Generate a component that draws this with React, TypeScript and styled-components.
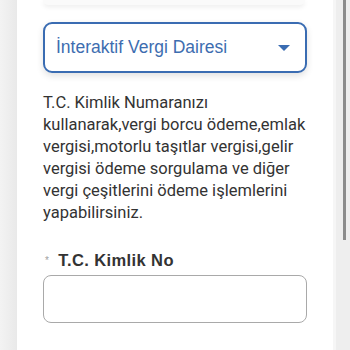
import React from 'react';
import styled, { createGlobalStyle } from 'styled-components';

const GlobalStyle = createGlobalStyle`
  html, body {
    margin: 0;
    padding: 0;
    background: #eeeeee;
  }
  * {
    box-sizing: border-box;
  }
`;

const Screen = styled.div`
  display: flex;
  width: 350px;
  height: 350px;
  overflow: hidden;
  font-family: 'Liberation Sans', Arial, sans-serif;
`;

const LeftGutter = styled.div`
  width: 17px;
  flex-shrink: 0;
  background: linear-gradient(to right, #f3f3f3, #e9e9e9);
`;

const Panel = styled.div`
  width: 316px;
  flex-shrink: 0;
  background: #ffffff;
  padding: 0 26px;
  display: flex;
  flex-direction: column;
`;

const RightGutter = styled.div`
  flex: 1;
  background: #eeeeee;
  border-left: 3px solid #f6f6f6;
  display: flex;
  justify-content: flex-end;
  padding-right: 4px;
`;

const ScrollThumb = styled.div`
  width: 3px;
  height: 240px;
  background: #8c8c8c;
`;

const TopCard = styled.div`
  height: 5px;
  margin-right: 2px;
  background: #fafafa;
  border-radius: 0 0 8px 8px;
  box-shadow: 0 2px 5px rgba(0, 0, 0, 0.08);
`;

const Select = styled.div`
  margin-top: 17px;
  height: 51px;
  border: 2px solid #3a6cb2;
  border-radius: 9px;
  box-shadow: 0 3px 7px rgba(0, 0, 0, 0.12);
  display: flex;
  align-items: center;
  justify-content: space-between;
  padding: 0 15px 0 11px;
  color: #3d6db0;
  font-size: 17.5px;
`;

const Caret = styled.span`
  width: 0;
  height: 0;
  border-left: 6px solid transparent;
  border-right: 6px solid transparent;
  border-top: 6px solid #3a6cb2;
  margin-top: 1px;
`;

const Description = styled.p`
  margin: 19px 0 0;
  font-family: Roboto, 'Liberation Sans', sans-serif;
  font-size: 16.5px;
  line-height: 22px;
  color: #333333;
`;

const Label = styled.div`
  margin-top: 27px;
  display: flex;
  align-items: center;
  gap: 9px;
  padding-left: 2px;
  font-size: 16.5px;
  font-weight: 700;
  letter-spacing: 0.4px;
  color: #333333;
`;

const Star = styled.span`
  color: #a0a0a0;
  font-size: 10px;
  font-weight: 400;
`;

const Input = styled.input`
  margin-top: 5px;
  height: 48px;
  width: 100%;
  border: 1px solid #a9a9a9;
  border-radius: 8px;
  background: #ffffff;
  outline: none;
`;

export default function App() {
  return (
    <>
      <GlobalStyle />
      <Screen>
        <LeftGutter />
        <Panel>
          <TopCard />
          <Select>
            <span>İnteraktif Vergi Dairesi</span>
            <Caret />
          </Select>
          <Description>
            T.C. Kimlik Numaranızı kullanarak,vergi borcu ödeme,emlak vergisi,motorlu taşıtlar
            vergisi,gelir vergisi ödeme sorgulama ve diğer vergi çeşitlerini ödeme işlemlerini
            yapabilirsiniz.
          </Description>
          <Label>
            <Star>*</Star>
            T.C. Kimlik No
          </Label>
          <Input type="text" />
        </Panel>
        <RightGutter>
          <ScrollThumb />
        </RightGutter>
      </Screen>
    </>
  );
}
